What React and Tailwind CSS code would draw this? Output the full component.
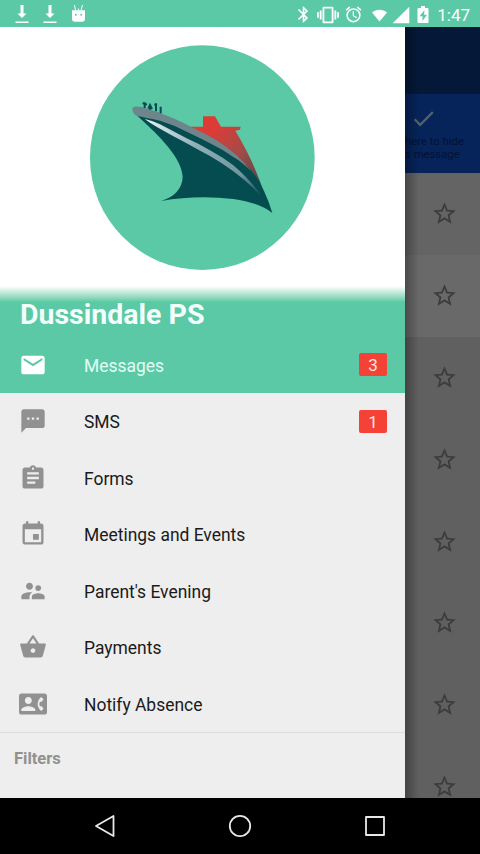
import {
  MdEmail,
  MdTextsms,
  MdAssignment,
  MdEvent,
  MdSupervisorAccount,
  MdShoppingBasket,
  MdContactPhone,
  MdStarBorder,
  MdCheck,
  MdBluetooth,
  MdVibration,
  MdAlarm,
  MdSignalCellular4Bar,
} from 'react-icons/md';

const menuItems = [
  { label: 'Messages', icon: MdEmail, badge: 3, active: true },
  { label: 'SMS', icon: MdTextsms, badge: 1 },
  { label: 'Forms', icon: MdAssignment },
  { label: 'Meetings and Events', icon: MdEvent },
  { label: "Parent's Evening", icon: MdSupervisorAccount },
  { label: 'Payments', icon: MdShoppingBasket },
  { label: 'Notify Absence', icon: MdContactPhone },
];

const messageRows = [
  'bg-[#646464]',
  'bg-[#696969]',
  'bg-[#606060]',
  'bg-[#606060]',
  'bg-[#606060]',
  'bg-[#606060]',
  'bg-[#606060]',
  'bg-[#606060]',
];

function DownloadIcon() {
  return (
    <svg width="14" height="19" viewBox="0 0 14 19" fill="white">
      <path d="M5.5 0h3v8.500h3L7 13 2.500 8.500h3zM0.5 16.500h13v1.500h-13z" />
    </svg>
  );
}

function AndroidHead() {
  return (
    <svg width="15" height="18" viewBox="0 0 15 18" fill="white">
      <path d="M1 5.200h13v8.500a3 3 0 0 1-3 3H4a3 3 0 0 1-3-3z" />
      <path d="M3.500 0l1 5.500M11.500 0l-1.500 5.500M7.500 3.500v2" stroke="white" strokeWidth="1" />
      <circle cx="4.800" cy="9.700" r="1" fill="#5bc9a6" />
      <circle cx="10.200" cy="9.700" r="1" fill="#5bc9a6" />
    </svg>
  );
}

function BatteryIcon() {
  return (
    <svg width="12" height="17" viewBox="0 0 12 17">
      <path d="M4 0h4v2h2.500a1 1 0 0 1 1 1v13a1 1 0 0 1-1 1h-9a1 1 0 0 1-1-1V3a1 1 0 0 1 1-1H4z" fill="white" />
      <path d="M7.500 4L2.500 10.300h3V15l4.500-6.300H7z" fill="#5bc9a6" />
    </svg>
  );
}

function StatusBar() {
  return (
    <div className="h-[27px] shrink-0 bg-[#5bc9a6] flex items-center justify-between text-white">
      <div className="flex items-center pl-[14.5px] pt-[1px] gap-[14px]">
        <DownloadIcon />
        <DownloadIcon />
        <AndroidHead />
      </div>
      <div className="flex items-center pr-[10px] pt-[2px]">
        <MdBluetooth size={19} className="mr-[4px]" />
        <MdVibration size={22} className="mr-[5px]" />
        <MdAlarm size={19} className="mr-[8px]" />
        <svg width="17" height="14" viewBox="0 0 17 14" className="mr-[3px]" fill="white">
          <path d="M8.500 13.500L1 4.500C5.200 0.700 11.800 0.700 16 4.500z" />
        </svg>
        <MdSignalCellular4Bar size={20} className="mr-[6px]" />
        <BatteryIcon />
        <span className="pl-[8px] text-[17px] leading-5">1:47</span>
      </div>
    </div>
  );
}

function ShipLogo() {
  return (
    <svg width="245" height="245" viewBox="0 0 735 735">
      <defs>
        <linearGradient id="funnel" gradientUnits="userSpaceOnUse" x1="400" y1="285" x2="530" y2="440">
          <stop offset="0" stopColor="#dc3c35" />
          <stop offset="0.5" stopColor="#a34b49" />
          <stop offset="1" stopColor="#594848" />
        </linearGradient>
        <linearGradient id="stripe" gradientUnits="userSpaceOnUse" x1="200" y1="255" x2="540" y2="480">
          <stop offset="0" stopColor="#e4f3f5" />
          <stop offset="0.4" stopColor="#8fb0b7" />
          <stop offset="0.8" stopColor="#6f969e" />
          <stop offset="1" stopColor="#1b5860" />
        </linearGradient>
      </defs>
      <circle cx="367" cy="368" r="337" fill="#5bc9a6" />
      <path d="M325 275H369V244H405L423 275H482L480 284L466 287Q525 385 553 478L500 410L400 335z" fill="url(#funnel)" />
      <path d="M165 236Q250 248 320 284Q400 322 460 361Q530 410 552 468Q567 500 577 534Q535 502 460 492Q350 479 243 498Q306 478 308 425C305 362 222 288 165 236z" fill="#044c50" />
      <path d="M157 218Q168 211 188 217Q235 230 280 250Q310 263 335 277Q375 295 410 316Q480 362 512 408Q485 380 460 366Q425 342 390 325Q355 306 320 290Q280 269 240 257Q200 249 172 243Q157 238 157 218z" fill="#6c868c" />
      <path d="M194 252Q215 256 240 268Q280 289 320 310Q356 326 390 346Q430 368 460 391Q510 433 543 482Q505 442 460 409Q425 383 390 363Q355 345 320 325Q275 302 232 277Q210 264 194 252z" fill="url(#stripe)" />
      <g stroke="#044c50" strokeWidth="6" fill="none">
        <path d="M194 202v17M188 204l13 5M210 212v12M205 221l5-11 6 12M228 205v24M223 208l8 3M242 215v20M239 220h6" />
      </g>
    </svg>
  );
}

function MenuItem({ item }) {
  const Icon = item.icon;
  return (
    <div className={`h-[56.5px] flex items-center pl-[18.5px] pr-[18px] ${item.active ? 'bg-[#5bc9a6] text-[#e2fff5]' : 'text-[#1a1a1a]'}`}>
      <Icon size={28} className={item.active ? 'text-white' : 'text-[#919191]'} />
      <span className="flex-1 pl-[37.5px] pt-[2px] text-[17.45px]">{item.label}</span>
      {item.badge && (
        <span className="w-[28px] h-[23px] rounded-[2px] bg-[#f44336] text-[#ffe4e0] text-[17px] pt-[2px] flex items-center justify-center">
          {item.badge}
        </span>
      )}
    </div>
  );
}

function Drawer() {
  return (
    <div className="w-[405px] shrink-0 bg-[#eeeeee] flex flex-col">
      <div className="h-[259px] shrink-0 bg-white pt-[8px] pl-[80px]">
        <ShipLogo />
      </div>
      <div className="h-[16px] shrink-0 bg-linear-to-b from-white to-[#5bc9a6]" />
      <div className="h-[34.5px] shrink-0 bg-[#5bc9a6] pl-[20px]">
        <h1 className="-mt-[3px] text-[28.5px] leading-8 font-bold text-[#f4fffb]">Dussindale PS</h1>
      </div>
      <nav>
        {menuItems.map((item) => (
          <MenuItem key={item.label} item={item} />
        ))}
      </nav>
      <div className="flex-1 border-t border-[#dcdcdc] pl-[14px] pt-[14px]">
        <span className="text-[16.5px] font-bold text-[#919191]">Filters</span>
      </div>
    </div>
  );
}

function MessageList() {
  return (
    <div className="relative flex-1 overflow-hidden bg-[#606060]">
      <div className="h-[67px] bg-[#051838]" />
      <div className="h-[79px] bg-[#06245a] pt-[11px]">
        <MdCheck size={27} className="ml-[5px] text-[#53616b]" />
        <p className="text-[11.3px] leading-[13px] pt-[3px] text-[#041230] whitespace-nowrap">
          here to hide
          <br />
          s message
        </p>
      </div>
      {messageRows.map((color, i) => (
        <div key={i} className={`h-[81.8px] flex items-center justify-center pl-[4px] ${color}`}>
          <MdStarBorder size={27} className="text-[#3c3c3c]" />
        </div>
      ))}
      {/* shadow cast by the open drawer */}
      <div className="absolute inset-y-0 left-0 w-[14px] bg-linear-to-r from-black/30 to-transparent" />
    </div>
  );
}

function NavBar() {
  return (
    <div className="h-[56px] shrink-0 bg-black flex items-center justify-center gap-[111px]">
      <svg width="24" height="24" viewBox="0 0 24 24" fill="none" stroke="#e8e8e8" strokeWidth="1.800" strokeLinejoin="round">
        <path d="M20.500 2v20L3 12z" />
      </svg>
      <svg width="24" height="24" viewBox="0 0 24 24" fill="none" stroke="#e8e8e8" strokeWidth="1.800">
        <circle cx="12" cy="12" r="10.200" />
      </svg>
      <svg width="24" height="24" viewBox="0 0 24 24" fill="none" stroke="#e8e8e8" strokeWidth="1.800" strokeLinejoin="round">
        <rect x="3" y="3" width="18" height="18" />
      </svg>
    </div>
  );
}

export default function App() {
  return (
    <div className="w-[480px] h-[854px] flex flex-col overflow-hidden bg-black font-['Roboto',sans-serif]">
      <StatusBar />
      <div className="flex-1 min-h-0 flex">
        <Drawer />
        <MessageList />
      </div>
      <NavBar />
    </div>
  );
}
